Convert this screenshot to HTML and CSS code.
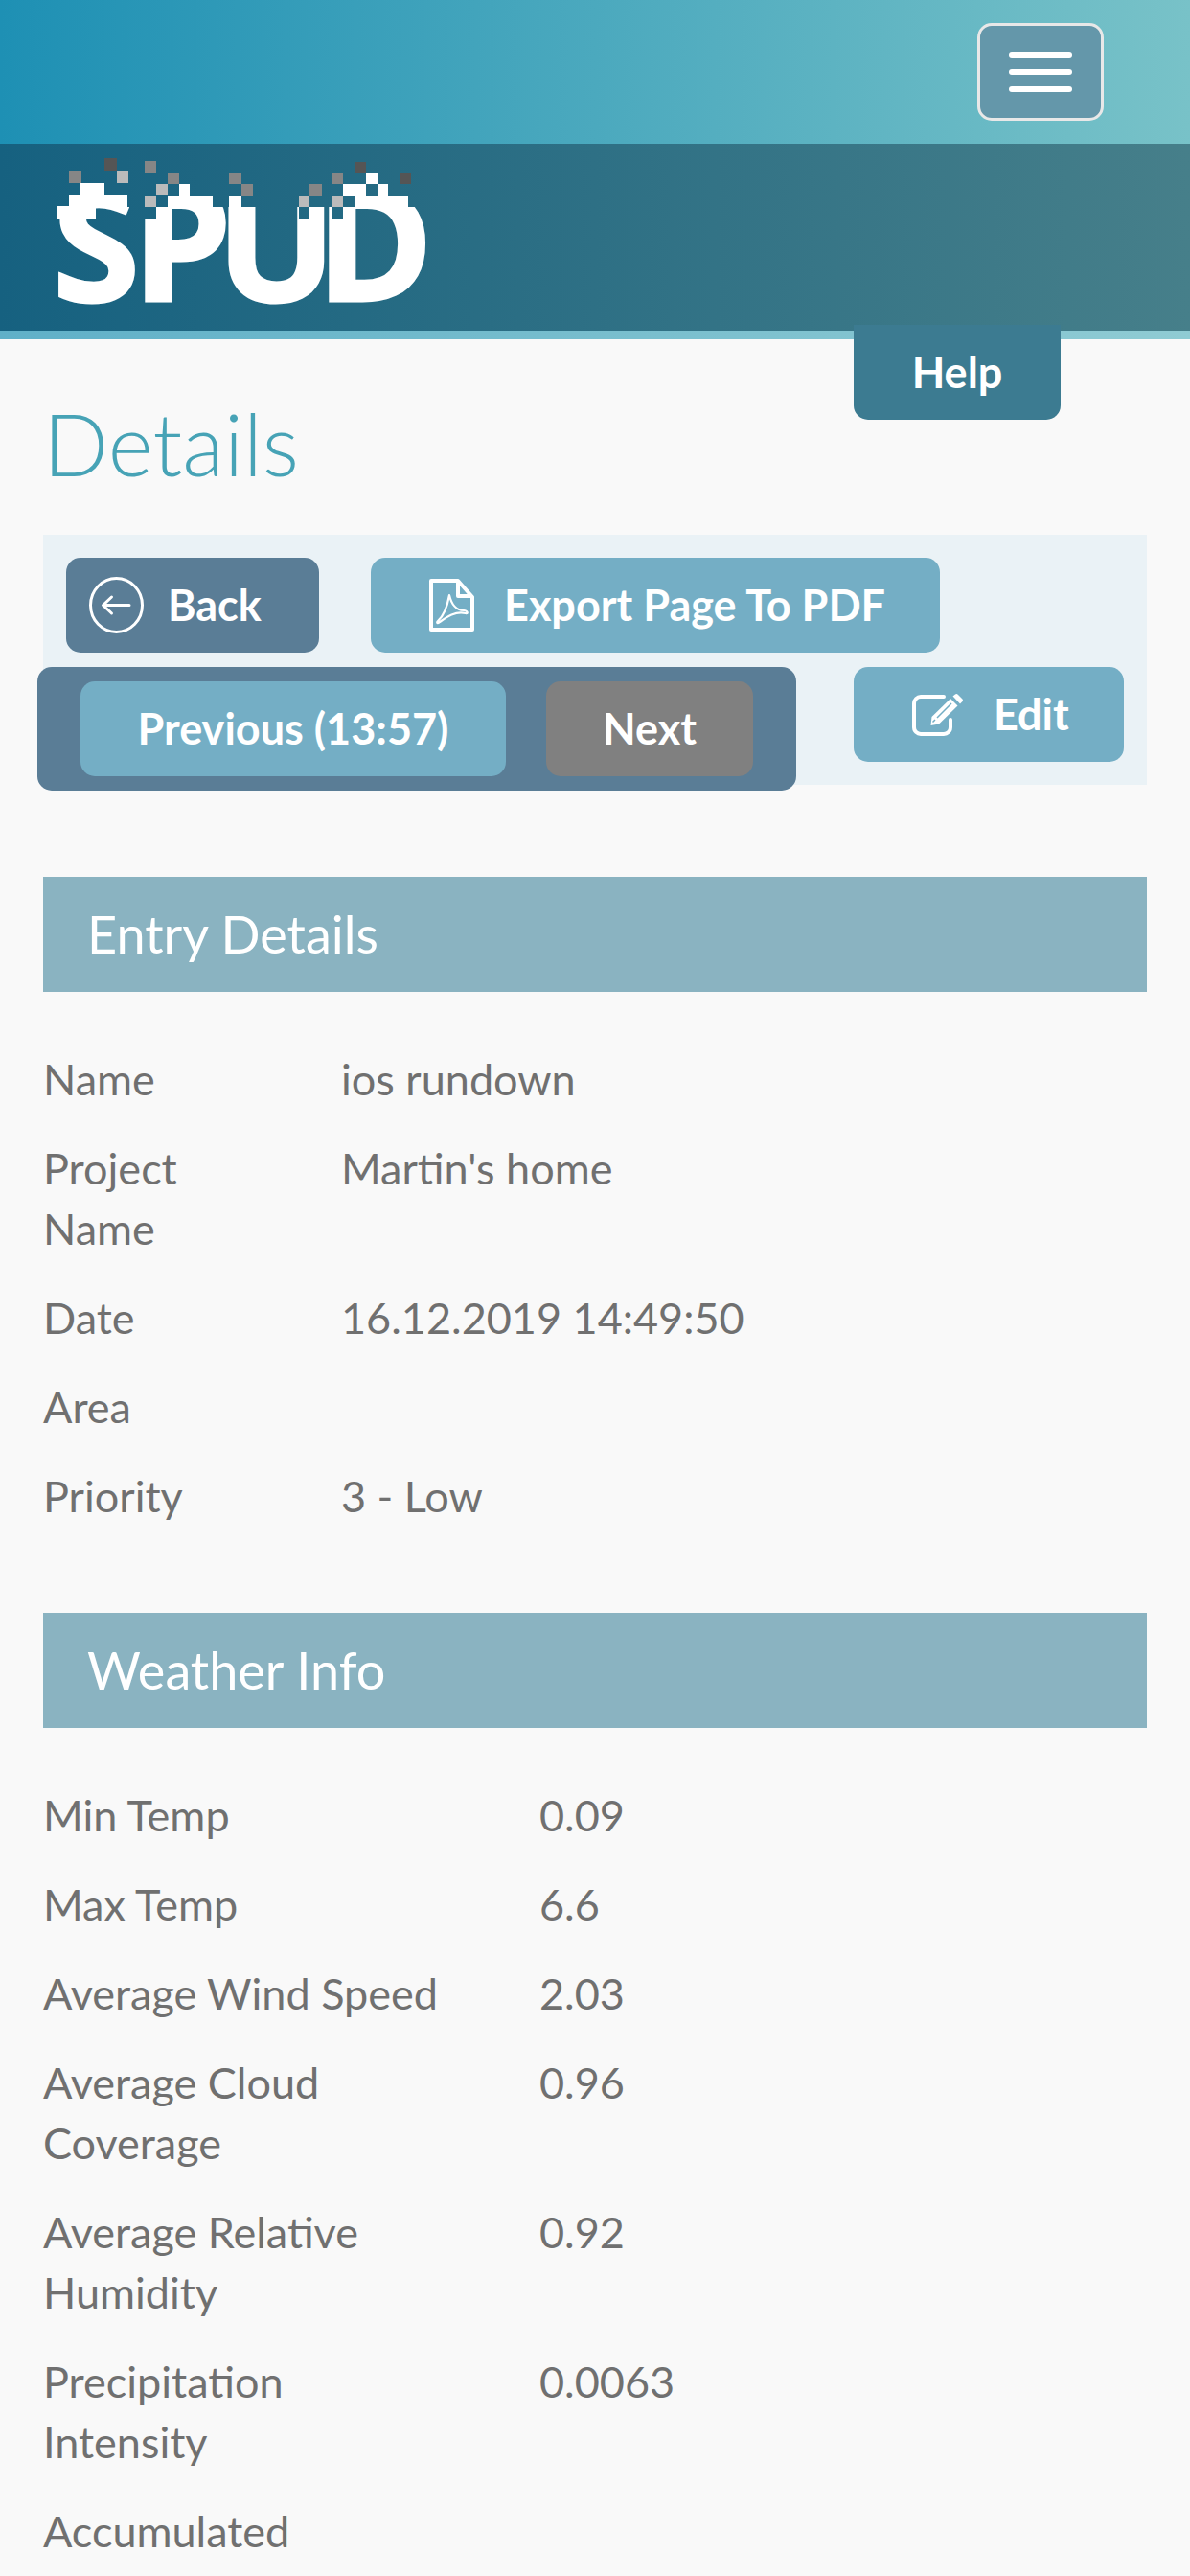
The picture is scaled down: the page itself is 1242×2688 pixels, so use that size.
FILE: index.html
```html
<!DOCTYPE html>
<html lang="en">
<head>
<meta charset="UTF-8" />
<meta name="viewport" content="width=device-width, initial-scale=1" />
<title>Details - SPUD</title>
<link rel="stylesheet" href="styles.css">
</head>
<body>
<header class="site-header">
  <div class="topbar">
    <button class="menu-toggle" type="button" aria-label="Menu">
      <span></span><span></span><span></span>
    </button>
  </div>
  <div class="brand">
    <svg class="logo" viewBox="0 0 390 165" width="390" height="165" aria-label="SPUD">
      <mask id="logo-mask" maskUnits="userSpaceOnUse" x="-10" y="0" width="400" height="180">
        <rect x="-10" y="66" width="400" height="114" fill="#fff"/>
        <rect x="91" y="66" width="12" height="12" fill="#000"/>
        <rect x="252" y="66" width="11" height="12" fill="#000"/>
        <rect x="286" y="66" width="12" height="12" fill="#000"/>
      </mask>
      <text class="logo-text" x="-5 78 166 270" y="164" mask="url(#logo-mask)">SPUD</text>
      <g class="logo-white">
        <rect x="24" y="41" width="25" height="13"/>
        <rect x="12" y="53" width="61" height="13"/>
        <rect x="0" y="65" width="40" height="14"/>
        <rect x="127" y="42" width="11" height="13"/>
        <rect x="115" y="54" width="47" height="13"/>
        <rect x="179" y="54" width="13" height="13"/>
        <rect x="322" y="30" width="12" height="12"/>
        <rect x="298" y="42" width="24" height="13"/>
        <rect x="334" y="42" width="11" height="13"/>
        <rect x="310" y="54" width="56" height="13"/>
      </g>
      <g class="px-mid">
        <rect x="12" y="28" width="13" height="13"/>
        <rect x="91" y="18" width="12" height="12"/>
        <rect x="115" y="30" width="12" height="12"/>
        <rect x="179" y="31" width="13" height="11"/>
        <rect x="192" y="42" width="12" height="12"/>
        <rect x="263" y="42" width="13" height="12"/>
        <rect x="286" y="31" width="12" height="11"/>
      </g>
      <g class="px-dark">
        <rect x="49" y="15" width="13" height="13"/>
        <rect x="311" y="19" width="11" height="12"/>
        <rect x="357" y="31" width="12" height="11"/>
      </g>
      <g class="px-light">
        <rect x="62" y="28" width="12" height="13"/>
        <rect x="103" y="42" width="12" height="11"/>
        <rect x="91" y="54" width="12" height="12"/>
        <rect x="252" y="54" width="11" height="12"/>
        <rect x="286" y="54" width="12" height="12"/>
      </g>
    </svg>
  </div>
  <div class="strip"></div>
  <a class="help-tab" href="#">Help</a>
</header>

<main class="content">
  <h1 class="page-title">Details</h1>

  <div class="toolbar">
    <div class="toolbar-row">
      <a class="btn btn-dark btn-back" href="#">
        <svg class="icon" width="57" height="59" viewBox="0 0 57 59" fill="none" stroke="#fff">
          <ellipse cx="28.5" cy="29.5" rx="27" ry="28" stroke-width="3"/>
          <path d="M42 29.5H15M23.5 21l-9 8.5 9 8.5" stroke-width="3" stroke-linecap="round" stroke-linejoin="round"/>
        </svg>
        Back
      </a>
      <a class="btn btn-export" href="#">
        <svg class="icon" width="47" height="55" viewBox="0 0 47 55" fill="none" stroke="#fff">
          <path d="M2 2H30L45 19V53H2Z" stroke-width="4" stroke-linejoin="round"/>
          <path d="M30 2V18H45" stroke-width="4" stroke-linejoin="round"/>
          <path d="M21 17C19 28 16 38 9 44C7 46 9 47 11 45C18 40 28 33 38 36C41 37 40 33 36 33C28 33 23 26 21 17Z" stroke-width="2.2" stroke-linejoin="round"/>
        </svg>
        Export Page To PDF
      </a>
    </div>
    <div class="toolbar-row">
      <div class="pager">
        <a class="btn btn-prev" href="#">Previous (13:57)</a>
        <a class="btn btn-next" href="#">Next</a>
      </div>
      <a class="btn btn-edit" href="#">
        <svg class="icon" width="54" height="44" viewBox="0 0 54 44" fill="none">
          <path d="M33 3H9A7 7 0 0 0 2 10V35A7 7 0 0 0 9 42H33A7 7 0 0 0 40 35V27" stroke="#fff" stroke-width="4" stroke-linecap="round"/>
          <path d="M19.500 33L20.500 24L40 5L47.500 12.500L28 31.500Z" fill="#fff"/>
          <path d="M42.500 2.500L45 .5Q46.500-.5 48 1L52.500 5.500Q53.500 7 52.500 8L50 10.500Z" fill="#fff"/>
          <path d="M26 25L41 10M24 27L21.500 29.500" stroke="#74aec5" stroke-width="1.500"/>
        </svg>
        Edit
      </a>
    </div>
  </div>

  <section class="panel">
    <h2 class="panel-title">Entry Details</h2>
    <dl class="info-list info-entry">
      <dt>Name</dt><dd>ios rundown</dd>
      <dt>Project Name</dt><dd>Martin's home</dd>
      <dt>Date</dt><dd>16.12.2019 14:49:50</dd>
      <dt>Area</dt><dd></dd>
      <dt>Priority</dt><dd>3 - Low</dd>
    </dl>
  </section>

  <section class="panel">
    <h2 class="panel-title">Weather Info</h2>
    <dl class="info-list info-weather">
      <dt>Min Temp</dt><dd>0.09</dd>
      <dt>Max Temp</dt><dd>6.6</dd>
      <dt>Average Wind Speed</dt><dd>2.03</dd>
      <dt>Average Cloud Coverage</dt><dd>0.96</dd>
      <dt>Average Relative Humidity</dt><dd>0.92</dd>
      <dt>Precipitation Intensity</dt><dd>0.0063</dd>
      <dt>Accumulated</dt><dd></dd>
    </dl>
  </section>
</main>
</body>
</html>
```

FILE: styles.css
```css
:root {
  --btn-blue: #74aec5;
  --btn-dark: #5a7d96;
  --panel-head: #8ab3c1;
  --text-color: #707070;
  --radius: 15px;
}

* {
  box-sizing: border-box;
}

html,
body {
  height: 2688px;
  overflow: hidden;
}

body {
  margin: 0;
  background: #f9f9f9;
  color: var(--text-color);
  font-family: Lato, "Open Sans", sans-serif;
  font-size: 45px;
  line-height: 63px;
}

a {
  color: inherit;
  text-decoration: none;
}

/* header */
.site-header {
  position: relative;
}

.topbar {
  height: 150px;
  display: flex;
  align-items: center;
  justify-content: flex-end;
  padding-right: 90px;
  background: linear-gradient(90deg, #1e90b4, #78c2c8);
}

.menu-toggle {
  width: 132px;
  height: 102px;
  display: flex;
  flex-direction: column;
  align-items: center;
  justify-content: center;
  gap: 12px;
  padding: 0;
  background: #6497aa;
  border: 3px solid #e8e8e8;
  border-radius: var(--radius);
}

.menu-toggle span {
  width: 66px;
  height: 6px;
  border-radius: 3px;
  background: #fff;
}

.brand {
  height: 195px;
  padding-left: 60px;
  background: linear-gradient(90deg, #166180, #467f8a);
}

.logo {
  display: block;
  overflow: visible;
}

.logo-text {
  font-family: "Open Sans", sans-serif;
  font-weight: 700;
  font-size: 165px;
  fill: #fff;
  stroke: #fff;
  stroke-width: 3px;
}

.logo-white { fill: #fff; }
.px-mid { fill: #868686; }
.px-dark { fill: #555; }
.px-light { fill: #bbb; }

.strip {
  height: 9px;
  background: linear-gradient(90deg, #60b0c8, #8fcbd3);
}

.help-tab {
  position: absolute;
  top: 339px;
  right: 135px;
  width: 216px;
  height: 99px;
  display: flex;
  align-items: center;
  justify-content: center;
  background: #3c7b91;
  border-radius: 0 0 var(--radius) var(--radius);
  color: #fff;
  font-weight: 700;
}

/* page */
.content {
  padding: 0 45px;
}

.page-title {
  margin: 58px 0 46px;
  color: #47a3b6;
  font-size: 90px;
  font-weight: 300;
  line-height: 100px;
}

.toolbar {
  display: flex;
  flex-direction: column;
  gap: 15px;
  padding: 24px;
  background: #eaf2f6;
}

.toolbar-row {
  display: flex;
  align-items: flex-start;
}

.btn {
  height: 99px;
  display: flex;
  align-items: center;
  justify-content: center;
  gap: 31px;
  background: var(--btn-blue);
  border-radius: var(--radius);
  color: #fff;
  font-weight: 700;
  white-space: nowrap;
}

.btn-dark {
  background: var(--btn-dark);
}

.btn-back {
  width: 264px;
  justify-content: flex-start;
  gap: 25px;
  padding-left: 24px;
}

.btn-export {
  width: 594px;
  justify-content: flex-start;
  margin-left: 54px;
  padding-left: 61px;
}

.btn-prev {
  width: 444px;
}

.btn-next {
  width: 216px;
  background: #808080;
}

.btn-edit {
  width: 282px;
  justify-content: flex-start;
  margin-left: 60px;
  padding-left: 61px;
}

.icon {
  flex: none;
}

.pager {
  display: flex;
  gap: 42px;
  margin: 0 0 -30px -30px;
  padding: 15px 45px;
  background: var(--btn-dark);
  border-radius: var(--radius);
}

/* panels */
.panel {
  margin-top: 96px;
}

.panel + .panel {
  margin-top: 75px;
}

.panel-title {
  height: 120px;
  margin: 0;
  padding-left: 46px;
  background: var(--panel-head);
  color: #fff;
  font-size: 54px;
  font-weight: 400;
  line-height: 120px;
}

.info-list {
  display: grid;
  margin: 45px 0 0;
}

.info-entry {
  grid-template-columns: 311px 1fr;
}

.info-weather {
  grid-template-columns: 518px 1fr;
}

.info-list dt,
.info-list dd {
  margin: 0;
  padding: 15px 0;
}

.info-list dt {
  padding-right: 100px;
}
```
